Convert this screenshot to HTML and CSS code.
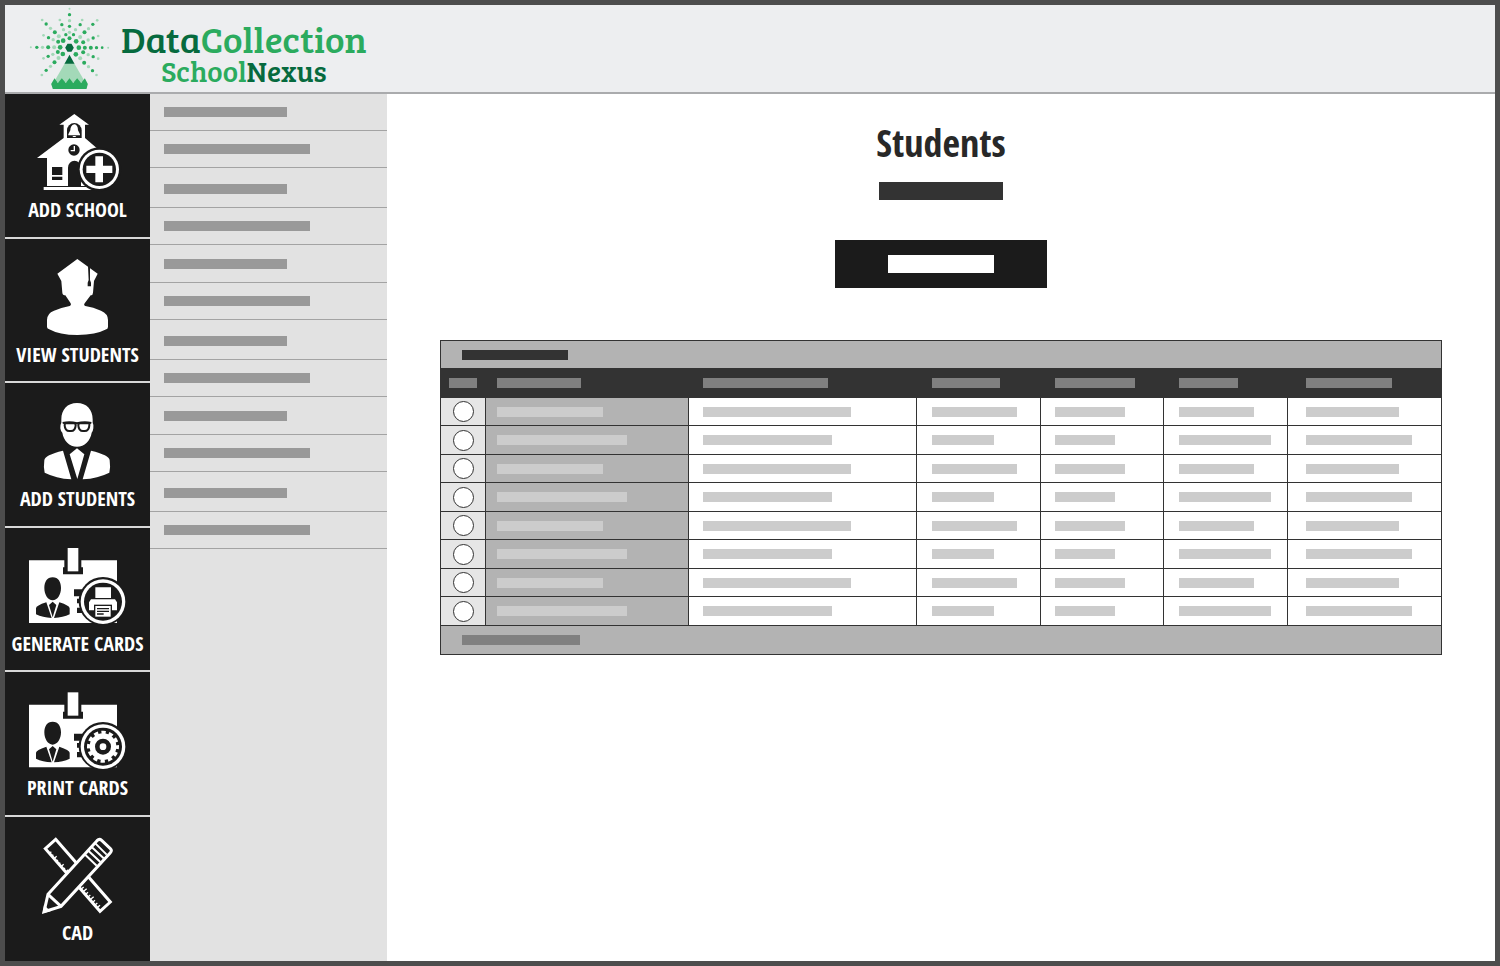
FILE: index.html
```html
<!DOCTYPE html>
<html lang="en">
<head>
<meta charset="utf-8">
<title>DataCollection SchoolNexus - Students</title>
<link rel="stylesheet" href="styles.css">
</head>
<body>
<div class="app">
  <header class="header">
    <svg class="mark" viewBox="82 15 260 261" aria-hidden="true">
      <g fill="#a3d9b8">
        <circle cx="209" cy="26" r="3"/><circle cx="209" cy="62" r="5"/><circle cx="209" cy="97" r="5"/>
        <circle cx="93" cy="142" r="3"/><circle cx="128" cy="142" r="5"/><circle cx="163" cy="142" r="6"/>
        <circle cx="325" cy="143" r="3"/><circle cx="127" cy="60" r="4"/><circle cx="152" cy="85" r="5"/><circle cx="177" cy="109" r="6"/>
        <circle cx="292" cy="61" r="4"/><circle cx="266" cy="86" r="5"/><circle cx="241" cy="111" r="6"/>
        <circle cx="126" cy="225" r="4"/><circle cx="152" cy="199" r="5"/><circle cx="176" cy="174" r="6"/>
        <circle cx="290" cy="225" r="4"/><circle cx="266" cy="200" r="5"/><circle cx="241" cy="175" r="6"/>
        <circle cx="180" cy="60" r="4"/><circle cx="191" cy="89" r="5"/><circle cx="247" cy="60" r="4"/><circle cx="227" cy="89" r="5"/>
        <circle cx="131" cy="106" r="4"/><circle cx="160" cy="119" r="5"/><circle cx="295" cy="108" r="4"/><circle cx="265" cy="120" r="5"/>
        <circle cx="131" cy="175" r="4"/><circle cx="159" cy="163" r="5"/><circle cx="295" cy="176" r="4"/><circle cx="265" cy="164" r="5"/>
        <path d="M195 190h28l33 57h-94z"/>
      </g>
      <g fill="#2bab5e">
        <circle cx="209" cy="44" r="5"/><circle cx="209" cy="79" r="5"/><circle cx="209" cy="115" r="6"/>
        <circle cx="111" cy="142" r="5"/><circle cx="145" cy="142" r="6"/><circle cx="181" cy="142" r="7"/>
        <circle cx="237" cy="143" r="7"/><circle cx="255" cy="143" r="6"/><circle cx="273" cy="143" r="6"/><circle cx="290" cy="143" r="5"/><circle cx="307" cy="143" r="4"/>
        <circle cx="139" cy="72" r="5"/><circle cx="165" cy="97" r="6"/><circle cx="190" cy="122" r="7"/>
        <circle cx="279" cy="73" r="5"/><circle cx="254" cy="97" r="6"/><circle cx="229" cy="124" r="7"/>
        <circle cx="139" cy="211" r="5"/><circle cx="164" cy="187" r="6"/><circle cx="189" cy="162" r="7"/>
        <circle cx="278" cy="212" r="5"/><circle cx="253" cy="188" r="6"/><circle cx="228" cy="163" r="7"/>
        <circle cx="186" cy="74" r="5"/><circle cx="198" cy="104" r="5"/><circle cx="241" cy="74" r="5"/><circle cx="221" cy="104" r="5"/>
        <circle cx="146" cy="113" r="5"/><circle cx="175" cy="125" r="6"/><circle cx="280" cy="114" r="5"/><circle cx="250" cy="127" r="6"/>
        <circle cx="145" cy="169" r="5"/><circle cx="174" cy="156" r="6"/><circle cx="280" cy="170" r="5"/><circle cx="250" cy="157" r="6"/>
        <path d="M164 235l10 14 12-14 12 14 11-14 11 14 12-14 12 14 11-14 9 17-4 15H159l-5-15z"/>
      </g>
      <path d="M203 131h12l7 12-7 12h-12l-7-12zM209 164l15 27h-30z" fill="#066a3e"/>
    </svg>
    <div class="wordmark">
      <div class="word-top"><span class="deep">Data</span><span class="leaf">Collection</span></div>
      <div class="word-bottom"><span class="leaf">School</span><span class="deep">Nexus</span></div>
    </div>
  </header>

  <div class="body">
    <nav class="rail" aria-label="Main">
      <a class="tile" href="#add-school">
        <svg class="icon" viewBox="84 66 300 240" aria-hidden="true">
          <path class="w" d="M223 72l44 32h-12v40l70 60h-19v84H141v-84h-30l80-60v-40h-13zM131 291h180v9H131z"/>
          <path class="k" d="M201 144v-23a22 22 0 0 1 44 0v23z"/>
          <path class="w" d="M223 103c9 2 11 9 11 18l6 12v3h-35v-3l6-12c0-9 3-16 12-18zM217 138h12l-3 3h-6z"/>
          <circle class="k" cx="222" cy="180" r="17"/><path d="M223 168v14h-11" fill="none" stroke="#fff" stroke-width="4"/>
          <path class="k" d="M156 231h31v24h-31zM156 260h31v10h-31zM204 288v-55a19 20 0 0 1 39 0v55z"/>
          <circle class="k" cx="298" cy="238" r="66"/><circle class="w" cx="298" cy="238" r="59"/><circle class="k" cx="298" cy="238" r="50"/>
          <path class="w" d="M286 199h23v28h28v22h-28v28h-23v-28h-27v-22h27z"/>
        </svg>
        <span class="label">ADD SCHOOL</span>
      </a>
      <a class="tile" href="#view-students">
        <svg class="icon" viewBox="84 65 300 240" aria-hidden="true">
          <path class="w" d="M232 71l61 44-11 22-3 35q-1 9-7 8l-18 24q-4 6 2 8 24 4 47 14 21 9 21 28v20q0 6-5 8-32 17-86 17-55 0-87-18-5-2-5-7v-20q0-20 21-28 21-9 47-14 6-2 3-8l-16-24q-8 0-9-8l-3-35-12-22z"/>
          <path class="k" d="M264 92h4l2 4v38l3 8v11h-10v-11l3-8z"/>
        </svg>
        <span class="label">VIEW STUDENTS</span>
      </a>
      <a class="tile" href="#add-students">
        <svg class="icon" viewBox="84 63 300 240" aria-hidden="true">
          <path class="w" d="M231 69c29 0 47 20 47 49v10q4 7 2 17-1 9-5 13c-4 24-21 42-44 42s-40-18-44-42q-5-4-6-13-1-10 3-17v-10c0-29 18-49 47-49z"/>
          <path d="M188 129q22-5 43 1 22-6 43-1" fill="none" stroke="#1b1b1b" stroke-width="6"/>
          <path d="M197 130h25q5 0 5 6-1 17-14 17h-5q-13 0-14-17 0-6 3-6zM240 130h25q4 0 3 6-1 17-14 17h-5q-13 0-14-17 0-6 5-6z" fill="#fff" stroke="#1b1b1b" stroke-width="6"/>
          <path class="w" d="M189 212l25 86q-46-3-80-20-4-17-1-37 1-16 56-29zM273 212l-25 86q46-3 80-20 4-17 1-37-1-16-56-29zM231 205l22 18-21 74-23-74z"/>
        </svg>
        <span class="label">ADD STUDENTS</span>
      </a>
      <a class="tile" href="#generate-cards">
        <svg class="icon" viewBox="84 62 300 240" aria-hidden="true">
          <path class="w" d="M87 105h264v188H87z"/>
          <path class="k" d="M193 103h51v23h5v21h-60v-21h4z"/><path class="w" d="M203 68h32v70h-32z"/>
          <path class="k" d="M158 156c17 0 25 14 25 32 0 20-11 37-25 37s-25-17-25-37c0-18 8-32 25-32zM139 231l16 47q-27-1-47-11v-18q0-8 31-18zM178 231l-16 47q27-1 47-11v-18q0-8-31-18zM158 229l11 10-11 37-11-37zM222 192h30v21h-30zM231 220h20v14h-20zM231 247h20v16h-20z"/>
          <circle class="k" cx="309" cy="228" r="73"/><circle class="w" cx="309" cy="229" r="67"/><circle class="k" cx="309" cy="229" r="57"/>
          <path class="w" d="M286 186h47v32h-47zM273 222h72l6 9v24h-84v-24z"/>
          <path class="k" d="M282 238h54v40h-54z"/><path class="w" d="M286 242h46v32h-46z"/>
          <path d="M291 250h36M291 258h36M291 266h20" stroke="#1b1b1b" stroke-width="4"/>
        </svg>
        <span class="label">GENERATE CARDS</span>
      </a>
      <a class="tile" href="#print-cards">
        <svg class="icon" viewBox="84 66 300 240" aria-hidden="true">
          <path class="w" d="M87 110h264v188H87z"/>
          <path class="k" d="M193 108h51v23h5v21h-60v-21h4z"/><path class="w" d="M203 73h32v70h-32z"/>
          <path class="k" d="M158 161c17 0 25 14 25 32 0 20-11 37-25 37s-25-17-25-37c0-18 8-32 25-32zM139 236l16 47q-27-1-47-11v-18q0-8 31-18zM178 236l-16 47q27-1 47-11v-18q0-8-31-18zM158 234l11 10-11 37-11-37zM222 197h30v21h-30zM231 225h20v14h-20zM231 252h20v16h-20z"/>
          <circle class="k" cx="309" cy="235" r="73"/><circle class="w" cx="309" cy="236" r="67"/><circle class="k" cx="309" cy="236" r="57"/>
          <circle class="w" cx="309" cy="236" r="40"/>
          <circle cx="309" cy="236" r="43" fill="none" stroke="#fff" stroke-width="10" stroke-dasharray="13 9.5" stroke-dashoffset="6"/>
          <circle class="k" cx="309" cy="236" r="24"/><circle class="w" cx="309" cy="236" r="10"/>
        </svg>
        <span class="label">PRINT CARDS</span>
      </a>
      <a class="tile" href="#cad">
        <svg class="icon" viewBox="83 69 300 240" aria-hidden="true">
          <g fill="#1b1b1b" stroke="#fff" stroke-width="9">
            <path d="M166 82l164 188-31 28-164-188z"/>
            <path d="M146 125l7-6M153 133l6-5M160 141l9-8M167 149l6-5M174 157l6-5M181 165l9-8M188 173l6-5M195 181l9-8M243 231l7-6M250 238l9-8M257 246l6-5M264 254l6-5M271 262l9-8M278 270l6-5M285 278l6-5M292 286l7-6" stroke-width="4"/>
            <path d="M143 247L290 86q7-7 14-1l26 25q6 6 0 12L182 283l-51 16z"/>
            <path d="M143 247l39 36" />
            <path d="M253 127l36 34M264 116l36 34M274 105l36 34M285 94l34 34" stroke-width="6"/>
          </g>
          <path class="w" d="M127 304l4-25 20 19z"/>
        </svg>
        <span class="label">CAD</span>
      </a>
    </nav>

    <ul class="submenu">
      <li><span class="bar"></span></li><li><span class="bar"></span></li><li><span class="bar"></span></li>
      <li><span class="bar"></span></li><li><span class="bar"></span></li><li><span class="bar"></span></li>
      <li><span class="bar"></span></li><li><span class="bar"></span></li><li><span class="bar"></span></li>
      <li><span class="bar"></span></li><li><span class="bar"></span></li><li><span class="bar"></span></li>
    </ul>

    <main class="main">
      <h1 class="title">Students</h1>
      <div class="subtitle"></div>
      <button class="action" type="button" aria-label="Action"><span class="action-text"></span></button>
      <table class="grid">
        <colgroup><col class="c1"><col class="c2"><col class="c3"><col class="c4"><col class="c5"><col class="c6"><col class="c7"></colgroup>
        <thead>
          <tr class="caption"><td colspan="7"><span class="bar"></span></td></tr>
          <tr class="heads"><th><span class="bar"></span></th><th><span class="bar"></span></th><th><span class="bar"></span></th><th><span class="bar"></span></th><th><span class="bar"></span></th><th><span class="bar"></span></th><th><span class="bar"></span></th></tr>
        </thead>
        <tbody>
          <tr><td><input type="radio" name="student" aria-label="Student 1"></td><td><span class="bar"></span></td><td><span class="bar"></span></td><td><span class="bar"></span></td><td><span class="bar"></span></td><td><span class="bar"></span></td><td><span class="bar"></span></td></tr>
          <tr><td><input type="radio" name="student" aria-label="Student 2"></td><td><span class="bar"></span></td><td><span class="bar"></span></td><td><span class="bar"></span></td><td><span class="bar"></span></td><td><span class="bar"></span></td><td><span class="bar"></span></td></tr>
          <tr><td><input type="radio" name="student" aria-label="Student 3"></td><td><span class="bar"></span></td><td><span class="bar"></span></td><td><span class="bar"></span></td><td><span class="bar"></span></td><td><span class="bar"></span></td><td><span class="bar"></span></td></tr>
          <tr><td><input type="radio" name="student" aria-label="Student 4"></td><td><span class="bar"></span></td><td><span class="bar"></span></td><td><span class="bar"></span></td><td><span class="bar"></span></td><td><span class="bar"></span></td><td><span class="bar"></span></td></tr>
          <tr><td><input type="radio" name="student" aria-label="Student 5"></td><td><span class="bar"></span></td><td><span class="bar"></span></td><td><span class="bar"></span></td><td><span class="bar"></span></td><td><span class="bar"></span></td><td><span class="bar"></span></td></tr>
          <tr><td><input type="radio" name="student" aria-label="Student 6"></td><td><span class="bar"></span></td><td><span class="bar"></span></td><td><span class="bar"></span></td><td><span class="bar"></span></td><td><span class="bar"></span></td><td><span class="bar"></span></td></tr>
          <tr><td><input type="radio" name="student" aria-label="Student 7"></td><td><span class="bar"></span></td><td><span class="bar"></span></td><td><span class="bar"></span></td><td><span class="bar"></span></td><td><span class="bar"></span></td><td><span class="bar"></span></td></tr>
          <tr><td><input type="radio" name="student" aria-label="Student 8"></td><td><span class="bar"></span></td><td><span class="bar"></span></td><td><span class="bar"></span></td><td><span class="bar"></span></td><td><span class="bar"></span></td><td><span class="bar"></span></td></tr>
        </tbody>
        <tfoot><tr><td colspan="7"><span class="bar"></span></td></tr></tfoot>
      </table>
    </main>
  </div>
</div>
</body>
</html>
```
FILE: styles.css
```css
* { box-sizing: border-box; }
body { margin: 0; font-family: "Open Sans Condensed", "Roboto Condensed", "Liberation Sans Narrow", "Open Sans", sans-serif; }
.app { min-height: 100vh; display: flex; flex-direction: column; border: 5px solid #4d4d4d; background: #fff; }

.header { display: flex; align-items: center; height: 89px; padding-left: 22px; background: #edeef0; border-bottom: 2px solid #aaabad; }
.mark { width: 87px; height: 87px; }
.wordmark { display: flex; flex-direction: column; align-items: center; margin-left: 7px; padding-top: 8px; font-family: "Bree Serif", "DejaVu Serif Condensed", "DejaVu Serif", serif; }
.word-top { font-size: 37px; line-height: 36px; }
.word-bottom { font-size: 29px; line-height: 30px; }
.deep { color: #066a3e; }
.leaf { color: #2bab5e; }

.body { flex: 1; display: flex; }
.rail { width: 145px; display: grid; grid-template-rows: repeat(6, 1fr); background: #1b1b1b; }
.tile { display: flex; flex-direction: column; align-items: center; padding-top: 18px; color: #fff; text-decoration: none; border-bottom: 2px solid #d8d8d8; }
.tile:last-child { border-bottom: 0; }
.icon { width: 100px; height: 80px; }
.w { fill: #fff; }
.k { fill: #1b1b1b; }
.label { margin-top: 4px; font-size: 20px; line-height: 28px; font-weight: 700; white-space: nowrap; }

.submenu { width: 237px; margin: 0; padding: 0; list-style: none; background: #e2e2e2; }
.submenu li { display: flex; align-items: flex-end; height: 37px; padding: 0 14px 13px; border-bottom: 1px solid #a3a3a3; }
.submenu li:nth-child(4n+3) { height: 40px; }
.submenu li:nth-child(4n+5) { height: 38px; }
.submenu .bar { width: 123px; background: #999; }
.submenu li:nth-child(even) .bar { width: 146px; }

.bar { display: block; height: 10px; }

.main { flex: 1; min-width: 0; display: flex; flex-direction: column; align-items: center; padding: 20px 53px; }
.title { margin: 0; font-size: 38px; line-height: 56px; font-weight: 700; color: #282828; }
.subtitle { width: 124px; height: 18px; margin-top: 12px; background: #333; }
.action { display: flex; align-items: center; justify-content: center; width: 212px; height: 48px; margin: 40px 0 52px; padding: 0; border: 0; background: #1b1b1b; }
.action-text { width: 106px; height: 18px; background: #fff; }

.grid { width: 100%; table-layout: fixed; border-collapse: collapse; border: 1px solid #333; }
.grid td, .grid th { padding: 0 0 0 15px; border: 1px solid #333; }
.grid tr { height: 28px; }
.grid tbody tr:nth-child(odd) { height: 28px; }
.grid tbody tr:nth-child(even), .grid .heads, .grid tfoot tr { height: 29px; }
.c1 { width: 4.5%; }
.c2 { width: 20.3%; }
.c3 { width: 22.8%; }
.c4, .c5 { width: 12.3%; }
.c6 { width: 12.4%; }

.grid .caption td, .grid tfoot td { padding-left: 21px; background: #b3b3b3; }
.caption .bar { width: 106px; background: #333; }
tfoot .bar { width: 118px; background: #808080; }

.grid .heads th { background: #333; }
.heads .bar { background: #808080; }
.grid .heads th:nth-child(1) { padding-left: 8px; }
.grid tr > :nth-child(2) { padding-left: 11px; }
.grid tr > :nth-child(3) { padding-left: 14px; }
.grid tr > :nth-child(5) { padding-left: 14px; }
.grid tr > :nth-child(7) { padding-left: 18px; }
.heads :nth-child(1) > .bar { width: 28px; }
.heads :nth-child(2) > .bar { width: 84px; }
.heads :nth-child(3) > .bar { width: 125px; }
.heads :nth-child(4) > .bar { width: 68px; }
.heads :nth-child(5) > .bar { width: 80px; }
.heads :nth-child(6) > .bar { width: 59px; }
.heads :nth-child(7) > .bar { width: 86px; }

tbody .bar { background: #ccc; }
.grid tbody td:nth-child(1) { padding: 0; background: #e6e6e6; }
.grid tbody td:nth-child(2) { background: #b3b3b3; }
tbody input { appearance: none; display: block; width: 21px; height: 21px; margin: 0 auto; border: 1px solid #333; border-radius: 50%; background: #fff; }
tbody td:nth-child(2) .bar { width: 106px; }
tbody td:nth-child(3) .bar { width: 148px; }
tbody td:nth-child(4) .bar { width: 85px; }
tbody td:nth-child(5) .bar { width: 70px; }
tbody td:nth-child(6) .bar { width: 75px; }
tbody td:nth-child(7) .bar { width: 93px; }
tbody tr:nth-child(even) td:nth-child(2) .bar { width: 130px; }
tbody tr:nth-child(even) td:nth-child(3) .bar { width: 129px; }
tbody tr:nth-child(even) td:nth-child(4) .bar { width: 62px; }
tbody tr:nth-child(even) td:nth-child(5) .bar { width: 60px; }
tbody tr:nth-child(even) td:nth-child(6) .bar { width: 92px; }
tbody tr:nth-child(even) td:nth-child(7) .bar { width: 106px; }
```
